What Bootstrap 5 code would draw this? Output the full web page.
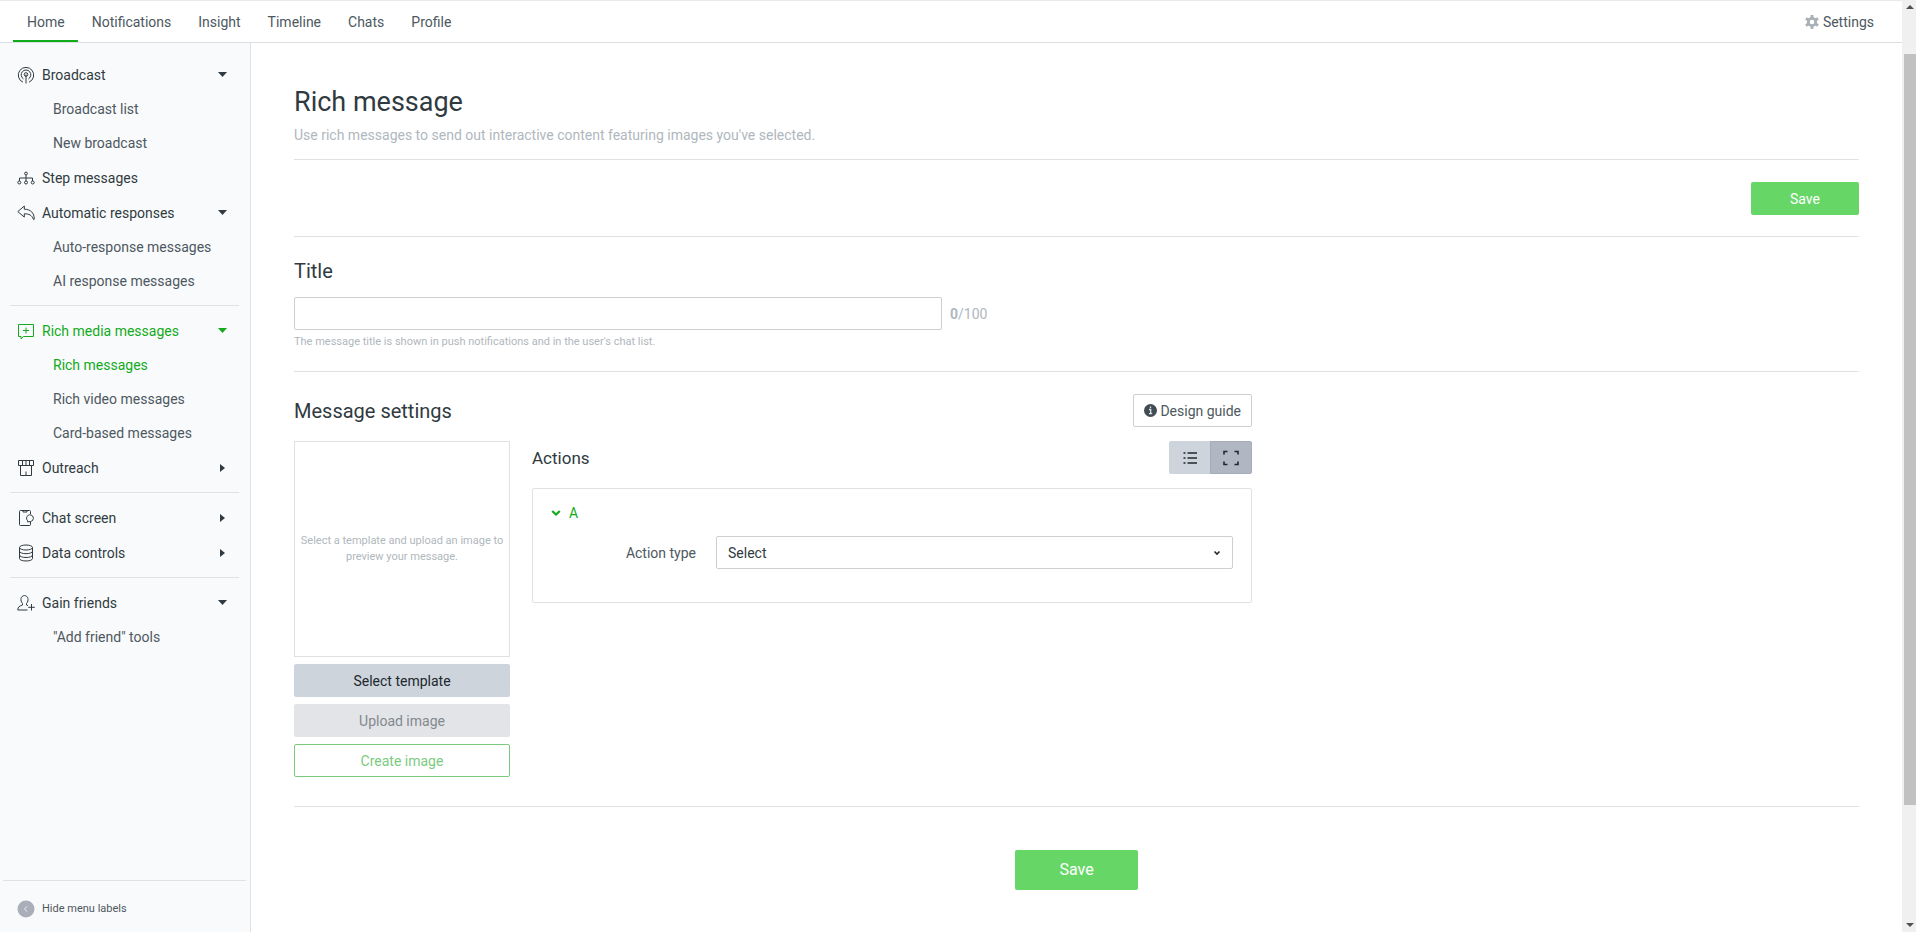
<!DOCTYPE html>
<html lang="en">
<head>
<meta charset="utf-8">
<meta name="viewport" content="width=device-width, initial-scale=1">
<title>Rich message</title>
<link rel="stylesheet" href="https://cdn.jsdelivr.net/npm/bootstrap@5.3.0/dist/css/bootstrap.min.css">
<style>
  :root { --ink: #303a40; --soft: #4d5860; --mute: #b0b7bd; --rule: #dfe2e4; --green: #12ab1b; --go: #66d767; }
  body { font-family: Roboto, "Liberation Sans", sans-serif; font-size: 14px; line-height: 20px; color: var(--ink); background: #fff; }
  a { text-decoration: none; }
  hr { margin: 0; border-color: var(--rule); opacity: 1; }
  svg { display: block; fill: none; stroke: currentColor; flex: none; }
  button, input, select { font-family: inherit; }

  .topbar { height: 43px; border-top: 1px solid #e9e9e9; border-bottom: 1px solid #dcdfe1; padding: 0 28px 0 13px; }
  .topbar .nav-link { color: var(--soft); padding: 11px 13px 8px 14px; border-bottom: 2px solid transparent; line-height: 20px; }
  .topbar .nav-link.active { border-color: var(--green); }
  .topbar .settings { color: var(--soft); }

  .sidebar { width: 251px; flex: none; background: #f9fafc; border-right: 1px solid var(--rule); padding-top: 14px; }
  .side-row { height: 35px; padding: 0 23px 0 17px; gap: 7px; color: var(--ink); }
  .side-sub { height: 34px; padding-left: 53px; color: var(--soft); }
  .side-rule { margin: 7px 11px 7px 10px; }
  .side-foot { margin: 0 4px 0 3px; border-top: 1px solid var(--rule); height: 52px; padding: 5px 14px 0; gap: 7px; font-size: 11px; color: var(--soft); }
  .side-row.on, .side-sub.on { color: var(--green); }
  .tri { fill: currentColor; stroke: none; }

  .content { padding: 41px 43px 41px; }
  h1 { font-size: 27px; line-height: 36px; font-weight: 400; margin: 0; }
  h2 { font-size: 20px; line-height: 28px; font-weight: 400; margin: 0; }
  h3 { font-size: 17px; line-height: 24px; font-weight: 400; margin: 0; }
  .mute { color: var(--mute); }
  .tiny { font-size: 11px; line-height: 16px; }
  .intro { margin: 5px 0 14px; }
  .save-bar { padding: 22px 0 21px; }
  .btn { font-size: 14px; line-height: 20px; height: 33px; padding: 0 12px; border-radius: 2px; }
  .btn-go { background: var(--go); color: #fff; width: 108px; }
  .btn-go.big { width: 123px; height: 40px; font-size: 16px; }
  .btn-plain { background: #fff; border-color: #ccd0d3; color: var(--soft); padding: 0 10px; gap: 3px; }
  .btn-tone { background: #ced4dc; color: #20282e; }
  .btn-off:disabled { background: #e2e4e7; color: #83898e; opacity: 1; border-color: transparent; }
  .btn-line { background: #fff; border-color: #7bcb7e; color: #7bcb7e; }
  .form-control, .form-select { font-size: 14px; line-height: 20px; height: 33px; border-color: #ccd0d3; border-radius: 2px; padding: 0 11px; color: var(--ink); }
  .form-select { background-image: url("data:image/svg+xml,%3Csvg xmlns='http://www.w3.org/2000/svg' viewBox='0 0 8 8'%3E%3Cpath d='M1.5 2.5 4 5l2.500-2.500' fill='none' stroke='%23222a30' stroke-width='1.600'/%3E%3C/svg%3E"); background-size: 8px 8px; background-position: right 11px center; }
  .title-box { max-width: 648px; }
  .title-area { padding: 16px 0 21px; }
  .settings-area { max-width: 958px; }
  .settings-head { padding: 22px 0 14px; }
  .left-col { width: 216px; flex: none; }
  .right-col { margin-left: 22px; }
  .preview { border: 1px solid var(--rule); aspect-ratio: 1; }
  .stack { gap: 7px; margin-top: 7px; }
  .toggle .btn { width: 42px; color: #20282e; }
  .toggle .btn.active { background: #b0b7c3; border-color: #a5adb9; }
  .action-box { border: 1px solid var(--rule); border-radius: 2px; margin-top: 14px; padding: 14px 18px 33px 18px; }
  .action-toggle { color: var(--green); }
  .action-row { gap: 20px; margin-top: 13px; }
  .action-label { width: 145px; flex: none; color: var(--soft); }
  .end-rule { margin-top: 29px; }
  .save-row { margin-top: 43px; }

  .track { width: 14px; flex: none; background: #f0f0f0; color: #505050; padding: 4px 0 4px 2px; }
  .track span { background: #c1c1c1; flex: 752 1 0; margin-top: 44px; }
  .track i { flex: 117 1 0; }
</style>
</head>
<body>
<div class="d-flex min-vh-100">
  <div class="d-flex flex-column flex-grow-1">
    <header class="topbar d-flex justify-content-between align-items-start">
      <nav class="nav">
        <a class="nav-link active" href="#">Home</a>
        <a class="nav-link" href="#">Notifications</a>
        <a class="nav-link" href="#">Insight</a>
        <a class="nav-link" href="#">Timeline</a>
        <a class="nav-link" href="#">Chats</a>
        <a class="nav-link" href="#">Profile</a>
      </nav>
      <a class="settings d-flex align-items-center h-100" href="#">
        <svg class="me-1" width="14" height="14" viewBox="0 0 14 14" style="color:#a9b0b7"><circle cx="7" cy="7" r="3.700" stroke-width="2.800"/><path d="M7 0v3M7 11v3M.9 3.500l2.600 1.500M10.500 9l2.600 1.500M.9 10.500l2.600-1.500M10.500 5l2.600-1.500" stroke-width="2.800"/></svg>
        Settings
      </a>
    </header>

    <div class="d-flex flex-grow-1">
      <nav class="sidebar d-flex flex-column">
        <a class="side-row d-flex align-items-center" href="#">
          <svg width="18" height="18" viewBox="0 0 18 18"><path d="M6 16.200a7.700 7.700 0 1 1 6 0M6.500 12.900a4.800 4.800 0 1 1 5 0M9 8.500V17.500"/><circle cx="9" cy="8.500" r="1.800"/></svg>
          <span class="flex-grow-1">Broadcast</span>
          <svg class="tri" width="9" height="5" viewBox="0 0 9 5"><path d="M0 0h9L4.500 5z"/></svg>
        </a>
        <a class="side-sub d-flex align-items-center" href="#">Broadcast list</a>
        <a class="side-sub d-flex align-items-center" href="#">New broadcast</a>
        <a class="side-row d-flex align-items-center" href="#">
          <svg width="18" height="18" viewBox="0 0 18 18"><circle cx="9" cy="4.500" r="1.400"/><path d="M9 6v6M2.500 12V9h13v3"/><circle cx="2.300" cy="13.500" r="1.500"/><circle cx="9" cy="13.500" r="1.500"/><circle cx="15.700" cy="13.500" r="1.500"/></svg>
          <span class="flex-grow-1">Step messages</span>
        </a>
        <a class="side-row d-flex align-items-center" href="#">
          <svg width="18" height="18" viewBox="0 0 18 18"><path d="M.8 7.600 7.300 2v3.200c6.500.1 9.800 3.700 10 9.800-.1.800-.8.800-1 .1-1.400-3.700-3.900-5.300-9-5.300v3.300z" stroke-linejoin="round"/></svg>
          <span class="flex-grow-1">Automatic responses</span>
          <svg class="tri" width="9" height="5" viewBox="0 0 9 5"><path d="M0 0h9L4.500 5z"/></svg>
        </a>
        <a class="side-sub d-flex align-items-center" href="#">Auto-response messages</a>
        <a class="side-sub d-flex align-items-center" href="#">AI response messages</a>
        <hr class="side-rule">
        <a class="side-row on d-flex align-items-center" href="#">
          <svg width="18" height="18" viewBox="0 0 18 18"><path d="M1.500 2.500h15v12h-10L4 16.800v-2.300H1.500zM9 5.500v6M6 8.500h6"/></svg>
          <span class="flex-grow-1">Rich media messages</span>
          <svg class="tri" width="9" height="5" viewBox="0 0 9 5"><path d="M0 0h9L4.500 5z"/></svg>
        </a>
        <a class="side-sub on d-flex align-items-center" href="#">Rich messages</a>
        <a class="side-sub d-flex align-items-center" href="#">Rich video messages</a>
        <a class="side-sub d-flex align-items-center" href="#">Card-based messages</a>
        <a class="side-row d-flex align-items-center" href="#">
          <svg width="18" height="18" viewBox="0 0 18 18"><path d="M1.500 1.500h15v5h-15zM5.500 1.500v5M9 1.500v5M12.500 1.500v5M3.500 6.500v10h11v-10M9 16.500v-4"/></svg>
          <span class="flex-grow-1">Outreach</span>
          <svg class="tri" width="7" height="8" viewBox="0 0 7 8"><path d="M0 0v8l5-4z"/></svg>
        </a>
        <hr class="side-rule">
        <a class="side-row d-flex align-items-center" href="#">
          <svg width="18" height="18" viewBox="0 0 18 18"><path d="M13.500 5V2.500a1 1 0 0 0-1-1h-9a1 1 0 0 0-1 1v13a1 1 0 0 0 1 1h9a1 1 0 0 0 1-1V13M6 2v1h4V2"/><path d="M10.500 12.800v-1.200a3.400 3.400 0 1 1 2.800 1z" fill="#f9fafc"/></svg>
          <span class="flex-grow-1">Chat screen</span>
          <svg class="tri" width="7" height="8" viewBox="0 0 7 8"><path d="M0 0v8l5-4z"/></svg>
        </a>
        <a class="side-row d-flex align-items-center" href="#">
          <svg width="18" height="18" viewBox="0 0 18 18"><ellipse cx="9" cy="3.500" rx="6.500" ry="2.500"/><path d="M2.500 3.500v11c0 3.300 13 3.300 13 0v-11M2.500 7.200c0 3.300 13 3.300 13 0M2.500 11c0 3.300 13 3.300 13 0"/></svg>
          <span class="flex-grow-1">Data controls</span>
          <svg class="tri" width="7" height="8" viewBox="0 0 7 8"><path d="M0 0v8l5-4z"/></svg>
        </a>
        <hr class="side-rule">
        <a class="side-row d-flex align-items-center" href="#">
          <svg width="18" height="18" viewBox="0 0 18 18"><path d="M10.500 16H.8c0-3.200 1.500-3.800 4.700-5v-1.500C2.800 6.500 3.700 1.600 7.500 1.600s4.700 4.900 2 7.900V11l1.500.6M14.500 10v6.500M11.200 13.300h6.600"/></svg>
          <span class="flex-grow-1">Gain friends</span>
          <svg class="tri" width="9" height="5" viewBox="0 0 9 5"><path d="M0 0h9L4.500 5z"/></svg>
        </a>
        <a class="side-sub d-flex align-items-center" href="#">"Add friend" tools</a>
        <a class="side-foot d-flex align-items-center mt-auto" href="#">
          <svg width="18" height="18" viewBox="0 0 18 18"><circle cx="9" cy="9" r="8.500" fill="#a9aeb9" stroke="none"/><path d="M10 6.300 7.500 9l2.500 2.700" stroke="#e6e9ee"/></svg>
          Hide menu labels
        </a>
      </nav>

      <main class="content flex-grow-1">
        <h1>Rich message</h1>
        <p class="mute intro">Use rich messages to send out interactive content featuring images you've selected.</p>
        <hr>
        <div class="d-flex justify-content-end save-bar"><button type="button" class="btn btn-go">Save</button></div>
        <hr>
        <section class="title-area">
          <h2 class="mt-1"><label for="title">Title</label></h2>
          <div class="d-flex align-items-center gap-2 mt-2 pt-1">
            <input class="form-control title-box" id="title" type="text">
            <span class="mute"><b class="fw-bold">0</b>/100</span>
          </div>
          <div class="mute tiny pt-1">The message title is shown in push notifications and in the user's chat list.</div>
        </section>
        <hr>
        <section class="settings-area">
          <div class="settings-head d-flex justify-content-between align-items-center">
            <h2>Message settings</h2>
            <button type="button" class="btn btn-plain d-flex align-items-center">
              <svg width="13" height="13" viewBox="0 0 13 13"><circle cx="6.500" cy="6.500" r="6.500" fill="#414c54" stroke="none"/><path d="M5 5.500h1.700v4M5 9.700h3.200M6.500 2.500v1.600" stroke="#dfe3e6" stroke-width="1.300"/></svg>
              Design guide
            </button>
          </div>
          <div class="d-flex">
            <div class="left-col d-flex flex-column">
              <div class="preview d-flex align-items-center justify-content-center text-center mute tiny px-1">Select a template and upload an image to preview your message.</div>
              <div class="d-grid stack">
                <button type="button" class="btn btn-tone">Select template</button>
                <button type="button" class="btn btn-off" disabled>Upload image</button>
                <button type="button" class="btn btn-line">Create image</button>
              </div>
            </div>
            <div class="flex-grow-1 right-col">
              <div class="d-flex justify-content-between align-items-center">
                <h3>Actions</h3>
                <div class="btn-group toggle">
                  <button type="button" class="btn btn-tone d-flex align-items-center justify-content-center" aria-label="List view"><svg width="14" height="14" viewBox="0 0 14 14"><path d="M.5 2h2M.5 7h2M.5 12h2M4.500 2H14M4.500 7H14M4.500 12H14" stroke-width="1.300"/></svg></button>
                  <button type="button" class="btn active d-flex align-items-center justify-content-center" aria-label="Expanded view"><svg width="16" height="16" viewBox="0 0 16 16"><path d="M1 4.500V1.500h3.500M11.500 1.500H15v3M15 11.500v3h-3.500M4.500 14.500H1v-3" stroke-width="1.600"/></svg></button>
                </div>
              </div>
              <div class="action-box">
                <a class="d-flex align-items-center gap-2 action-toggle" href="#">
                  <svg width="10" height="8" viewBox="0 0 10 8"><path d="M1.200 2 5 5.500 8.800 2" stroke-width="2.200"/></svg>A
                </a>
                <div class="d-flex align-items-center action-row">
                  <label class="action-label text-end" for="kind">Action type</label>
                  <select class="form-select" id="kind"><option>Select</option></select>
                </div>
              </div>
            </div>
          </div>
        </section>
        <hr class="end-rule">
        <div class="text-center save-row"><button type="button" class="btn btn-go big">Save</button></div>
      </main>
    </div>
  </div>
  <div class="track d-flex flex-column align-items-stretch" aria-hidden="true">
    <svg class="tri align-self-center" width="8" height="6" viewBox="0 0 8 6"><path d="M0 5h8L4 1z"/></svg>
    <span></span><i></i>
    <svg class="tri align-self-center" width="8" height="6" viewBox="0 0 8 6"><path d="M0 1h8L4 5z"/></svg>
  </div>
</div>
<script src="https://cdn.jsdelivr.net/npm/bootstrap@5.3.0/dist/js/bootstrap.bundle.min.js"></script>
</body>
</html>
